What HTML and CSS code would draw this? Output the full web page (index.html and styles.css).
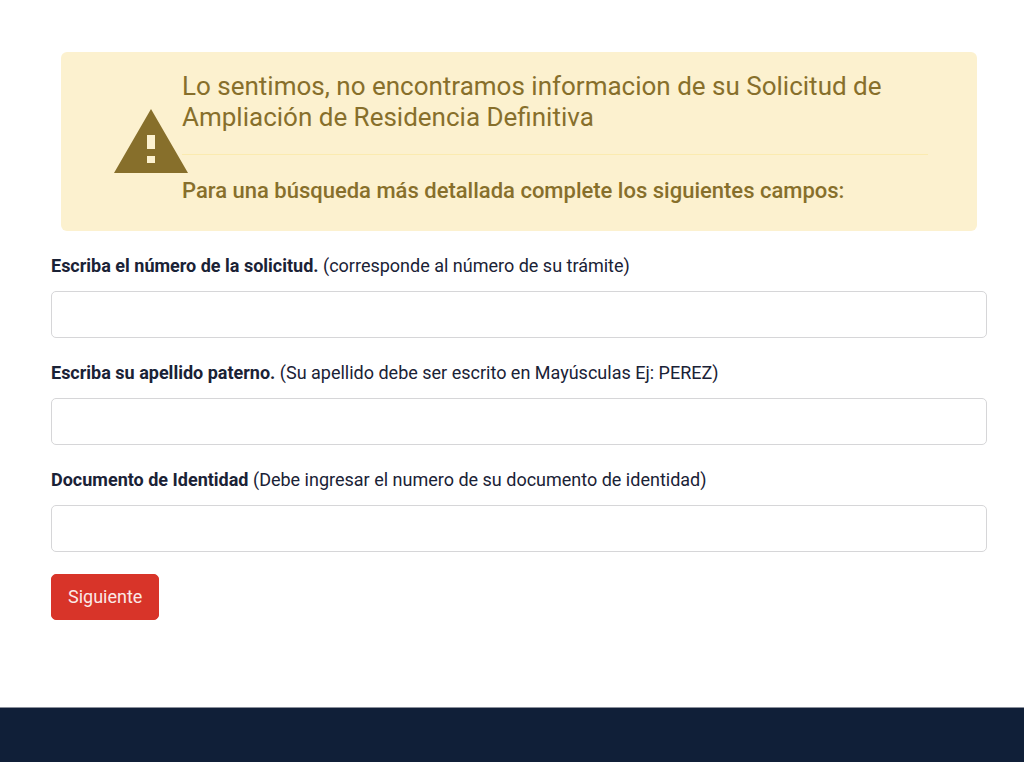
FILE: index.html
```html
<!DOCTYPE html>
<html lang="es">
<head>
<meta charset="utf-8">
<meta name="viewport" content="width=device-width, initial-scale=1">
<title>Solicitud de Ampliación de Residencia Definitiva</title>
<link rel="stylesheet" href="styles.css">
</head>
<body>
<main class="content">
  <section class="alert" role="alert">
    <svg class="alert-icon" viewBox="0 0 74 64" aria-hidden="true">
      <path fill="currentColor" fill-rule="evenodd" d="M37 0 74 64H0ZM33 26V40H41V26ZM33 47V54H41V47Z"/>
    </svg>
    <div class="alert-body">
      <h1 class="alert-title">Lo sentimos, no encontramos informacion de su Solicitud de Ampliación de Residencia Definitiva</h1>
      <hr class="alert-rule">
      <p class="alert-text">Para una búsqueda más detallada complete los siguientes campos:</p>
    </div>
  </section>
  <form class="form">
    <div class="field">
      <label class="label" for="solicitud"><strong>Escriba el número de la solicitud.</strong> (corresponde al número de su trámite)</label>
      <input class="input" id="solicitud" type="text">
    </div>
    <div class="field">
      <label class="label" for="apellido"><strong>Escriba su apellido paterno.</strong> (Su apellido debe ser escrito en Mayúsculas Ej: PEREZ)</label>
      <input class="input" id="apellido" type="text">
    </div>
    <div class="field">
      <label class="label" for="documento"><strong>Documento de Identidad</strong> (Debe ingresar el numero de su documento de identidad)</label>
      <input class="input" id="documento" type="text">
    </div>
    <button class="button" type="submit">Siguiente</button>
  </form>
</main>
<footer class="footer"></footer>
</body>
</html>
```
FILE: styles.css
```css
* {
  box-sizing: border-box;
}

body {
  margin: 0;
  min-height: 100vh;
  display: flex;
  flex-direction: column;
  background: #fff;
  color: #1a2236;
  font-family: Roboto, "Liberation Sans", sans-serif;
  font-size: 18px;
  line-height: 26px;
}

.content {
  padding: 52px 37px 87px 51px;
}

.alert {
  display: flex;
  align-items: center;
  margin: 0 10px 22px;
  padding: 19px 49px 26px 53px;
  border-radius: 6px;
  background: #fcf1cf;
  color: #876f2b;
}

.alert-icon {
  flex: none;
  width: 74px;
  height: 64px;
  margin-top: 6px;
  margin-right: -6px;
}

.alert-body {
  flex: 1;
}

.alert-title {
  margin: 0;
  font-size: 26px;
  font-weight: 400;
  line-height: 31px;
}

.alert-rule {
  margin: 21px 0;
  border: 0;
  border-top: 1px solid #fbebb0;
}

.alert-text {
  margin: 0;
  font-size: 22px;
  font-weight: 500;
  line-height: 29px;
}

.form {
  display: flex;
  flex-direction: column;
  align-items: flex-start;
  gap: 22px;
}

.field {
  display: flex;
  flex-direction: column;
  gap: 12px;
  width: 100%;
}

.label strong {
  font-weight: 700;
}

.input {
  width: 100%;
  height: 47px;
  padding: 8px 16px;
  border: 1px solid #d6d6d8;
  border-radius: 5px;
  background: #fff;
  color: inherit;
  font: inherit;
}

.button {
  height: 46px;
  padding: 0 16px;
  border: 1px solid #d83429;
  border-radius: 5px;
  background: #d83429;
  color: #fbe9e7;
  font: inherit;
}

.footer {
  flex: 1;
  min-height: 55px;
  border-top: 1px solid #8b909b;
  background: #101f38;
}
```
